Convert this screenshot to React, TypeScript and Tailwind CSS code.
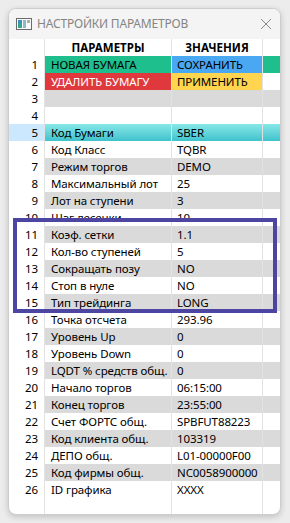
import React from 'react';

type Row = {
    n: number;
    name: string;
    value: string;
    kind?: 'new' | 'del' | 'gray' | 'sel' | 'plain';
};

const rows: Row[] = [
    { n: 1, name: 'НОВАЯ БУМАГА', value: 'СОХРАНИТЬ', kind: 'new' },
    { n: 2, name: 'УДАЛИТЬ БУМАГУ', value: 'ПРИМЕНИТЬ', kind: 'del' },
    { n: 3, name: '', value: '', kind: 'gray' },
    { n: 4, name: '', value: '' },
    { n: 5, name: 'Код Бумаги', value: 'SBER', kind: 'sel' },
    { n: 6, name: 'Код Класс', value: 'TQBR' },
    { n: 7, name: 'Режим торгов', value: 'DEMO' },
    { n: 8, name: 'Максимальный лот', value: '25' },
    { n: 9, name: 'Лот на ступени', value: '3' },
    { n: 10, name: 'Шаг лесенки', value: '10' },
    { n: 11, name: 'Коэф. сетки', value: '1.1' },
    { n: 12, name: 'Кол-во ступеней', value: '5' },
    { n: 13, name: 'Сокращать позу', value: 'NO' },
    { n: 14, name: 'Стоп в нуле', value: 'NO' },
    { n: 15, name: 'Тип трейдинга', value: 'LONG' },
    { n: 16, name: 'Точка отсчета', value: '293.96' },
    { n: 17, name: 'Уровень Up', value: '0' },
    { n: 18, name: 'Уровень Down', value: '0' },
    { n: 19, name: 'LQDT % средств общ.', value: '0' },
    { n: 20, name: 'Начало торгов', value: '06:15:00' },
    { n: 21, name: 'Конец торгов', value: '23:55:00' },
    { n: 22, name: 'Счет ФОРТС общ.', value: 'SPBFUT88223' },
    { n: 23, name: 'Код клиента общ.', value: '103319' },
    { n: 24, name: 'ДЕПО общ.', value: 'L01-00000F00' },
    { n: 25, name: 'Код фирмы общ.', value: 'NC0058900000' },
    { n: 26, name: 'ID графика', value: 'XXXX' },
];

const cell = 'h-[17px] border-r border-[#e2e2e2] flex items-center overflow-hidden whitespace-nowrap';
const cyan = 'bg-gradient-to-b from-[#86e8e8] to-[#3dc2cc]';

function cellColors(r: Row) {
    // [param, value, extra]
    if (r.kind === 'new') return ['bg-[#1fbf8d]', 'bg-[#4aa7f1]', 'bg-[#1fbf8d]'];
    if (r.kind === 'del') return ['bg-[#e0393d] text-white', 'bg-[#ffd44e]', 'bg-white'];
    if (r.kind === 'sel') return [cyan, cyan, cyan];
    if (r.kind === 'gray' || r.n % 2 === 1) return ['bg-[#dadada]', 'bg-[#dadada]', 'bg-[#dadada]'];
    return ['bg-white', 'bg-white', 'bg-white'];
}

function WinIcon() {
    return (
        <svg width="16" height="12" viewBox="0 0 16 12">
            <defs>
                <linearGradient id="ic" x1="0" y1="0" x2="0" y2="1">
                    <stop offset="0" stopColor="#3f8fc4" />
                    <stop offset="1" stopColor="#2fae7e" />
                </linearGradient>
            </defs>
            <rect x="0.5" y="0.5" width="15" height="11" fill="#fafafa" stroke="#6b6b6b" />
            <rect x="2" y="2" width="4" height="8" fill="url(#ic)" />
            <rect x="7" y="2" width="3" height="8" fill="#8fb9c9" />
            <rect x="11" y="2" width="3" height="3" fill="#b0b0b0" />
        </svg>
    );
}

export default function App() {
    return (
        <div className="min-h-screen bg-[#ececec] p-2" style={{ fontFamily: '"Noto Sans", "DejaVu Sans", sans-serif' }}>
            <div className="relative w-[273px] h-[507px] flex flex-col rounded-lg border border-[#cdcdcd] bg-white overflow-hidden shadow-[0_2px_6px_rgba(0,0,0,0.18)]">
                {/* title bar */}
                <div className="h-[30px] shrink-0 bg-[#f4f4f4] flex items-center pl-[7px] pr-[8px]">
                    <WinIcon />
                    <span className="ml-[5px] text-[12px] text-[#858585] tracking-[-0.2px]">НАСТРОЙКИ ПАРАМЕТРОВ</span>
                    <svg className="ml-auto" width="12" height="12" viewBox="0 0 12 12">
                        <path d="M1 1 L11 11 M11 1 L1 11" stroke="#8a8a8a" strokeWidth="1" />
                    </svg>
                </div>

                {/* header */}
                <div className="grid grid-cols-[36px_127px_91px_1fr] text-[11.5px] text-black font-bold">
                    <div className={cell} />
                    <div className={cell + ' justify-center'}>ПАРАМЕТРЫ</div>
                    <div className={cell + ' justify-center'}>ЗНАЧЕНИЯ</div>
                    <div className={cell + ' border-r-0'} />
                </div>

                {rows.map(r => {
                    const [p, v, x] = cellColors(r);
                    return (
                        <div key={r.n} className="grid grid-cols-[36px_127px_91px_1fr] text-[11.5px] text-black tracking-[-0.1px]">
                            <div className={cell + ' justify-end pr-[6px] ' + (r.kind === 'sel' ? 'bg-[#cce8ff]' : 'bg-white')}>{r.n}</div>
                            <div className={cell + ' pl-[6px] ' + p}>{r.name}</div>
                            <div className={cell + ' pl-[5px] ' + v}>{r.value}</div>
                            <div className={cell + ' border-r-0 ' + x} />
                        </div>
                    );
                })}

                {/* empty space below the last row */}
                <div className="flex-1 grid grid-cols-[36px_127px_91px_1fr]">
                    <div className="border-r border-[#e2e2e2]" />
                    <div className="border-r border-[#e2e2e2]" />
                    <div className="border-r border-[#e2e2e2]" />
                    <div />
                </div>

                {/* highlight frame */}
                <div className="absolute left-[4px] top-[209px] w-[264px] h-[95px] border-4 border-[#4c46a2]" />
            </div>
        </div>
    );
}
